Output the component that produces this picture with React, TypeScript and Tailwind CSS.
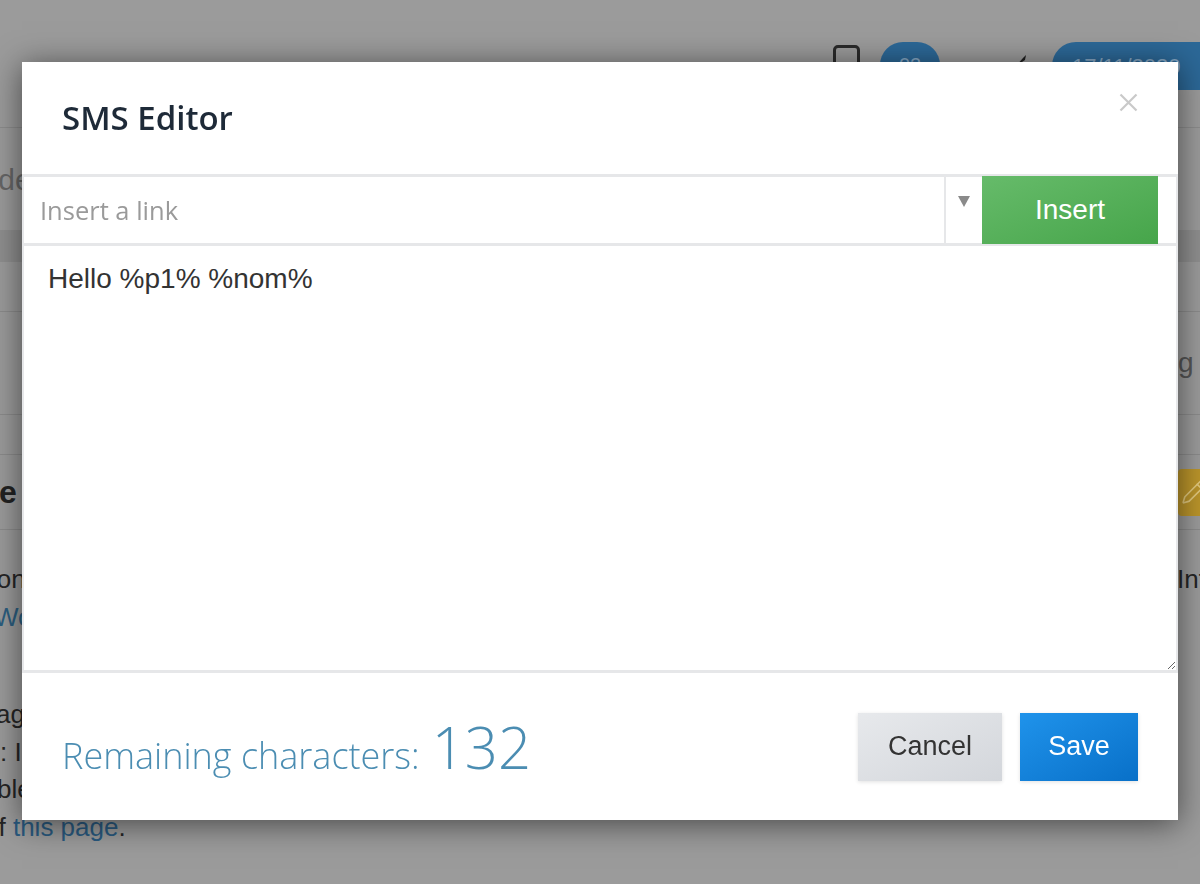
import { Pencil } from "lucide-react"

function LeftPeek({
  children,
  className = ""
}: {
  children: React.ReactNode
  className?: string
}) {
  return (
    <div className="w-[22px] shrink-0 overflow-hidden whitespace-nowrap">
      <div className={className}>{children}</div>
    </div>
  )
}

function BackgroundPage() {
  return (
    <div className="h-[884px] w-full overflow-hidden bg-[#9b9b9b] font-['Liberation_Sans',Arial,sans-serif]">
      <header className="flex h-[128px] items-start justify-end border-b border-[#8c8c8c] pt-[42px]">
        <div className="mt-[3px] h-[32px] w-[27px] rounded-[5px] border-[3px] border-[#2a2a2a]" />
        <div className="ml-[20px] flex h-[46px] w-[60px] items-center justify-center rounded-full bg-[#2c6897] text-[20px] text-[#87a8c5]">
          02
        </div>
        <svg
          className="ml-[74px] mt-[12px]"
          width="16"
          height="14"
          viewBox="0 0 16 14"
        >
          <path d="M2 12 L9 4 L12 1 L11 6 Z" fill="#1f1f1f" />
        </svg>
        <div className="-mr-[30px] ml-[22px] flex h-[48px] w-[178px] items-center rounded-full bg-[#2c6897] pl-[20px] text-[22px] text-[#87a8c5]">
          17/11/2020
        </div>
      </header>

      <div className="flex h-[102px] items-center">
        <LeftPeek className="-ml-[40px] text-[30px] text-[#666]">Code</LeftPeek>
      </div>
      <div className="h-[32px] bg-[#8f8f8f]" />
      <div className="h-[50px] border-b border-[#8b8b8b]" />
      <div className="flex h-[103px] items-center justify-end border-b border-[#8b8b8b]">
        <div className="w-[22px] overflow-hidden whitespace-nowrap text-[28px] text-[#555]">
          g
        </div>
      </div>
      <div className="h-[40px] border-b border-[#8b8b8b]" />
      <div className="flex h-[75px] items-center justify-between border-b border-[#8b8b8b]">
        <LeftPeek className="-ml-[1px] text-[32px] font-bold text-[#222]">
          e
        </LeftPeek>
        <div className="-mr-[10px] flex h-[47px] w-[32px] items-center justify-center rounded-l-[4px] bg-[#bb952b]">
          <Pencil className="h-[26px] w-[26px] shrink-0 text-[#e2c97e]" strokeWidth={1.5} />
        </div>
      </div>

      <div className="pt-[31px] text-[26px] leading-[37.5px] text-[#252525]">
        <div className="flex justify-between">
          <LeftPeek className="-ml-[9px]">ion</LeftPeek>
          <div className="w-[23px] overflow-hidden whitespace-nowrap">Int</div>
        </div>
        <LeftPeek className="-ml-[6px] text-[#2c5e80]">Word</LeftPeek>
        <div className="h-[60px]" />
        <LeftPeek className="-ml-[4px]">age</LeftPeek>
        <LeftPeek>: I</LeftPeek>
        <LeftPeek className="-ml-[3px]">ble</LeftPeek>
        <div className="-ml-[16px] whitespace-nowrap">
          of <span className="text-[#2a5a80]">this page</span>.
        </div>
      </div>
    </div>
  )
}

function SmsEditorModal() {
  return (
    <div className="fixed inset-0 flex justify-center pt-[62px]">
      <div className="flex h-[758px] w-[1156px] flex-col bg-white shadow-[0_4px_30px_rgba(0,0,0,0.55)]">
        <div className="flex h-[112px] shrink-0 items-center justify-between px-[40px]">
          <h2 className="font-['Open_Sans',sans-serif] text-[33px] font-semibold text-[#1e2a38]">
            SMS Editor
          </h2>
          <button className="mb-[32px] flex h-[20px] w-[20px] items-center justify-center">
            <svg width="19" height="19" viewBox="0 0 19 19">
              <path
                d="M1.5 1.5 L17.5 17.5 M17.5 1.5 L1.5 17.5"
                stroke="#c9c9c9"
                strokeWidth="2.2"
              />
            </svg>
          </button>
        </div>

        <div className="flex flex-1 flex-col border-x-2 border-[#e6e7e9]">
          <div className="flex h-[72px] shrink-0 border-y-[3px] border-[#e6e7e9]">
            <input
              className="min-w-0 flex-1 bg-white pl-[16px] font-['Open_Sans',sans-serif] text-[25.5px] text-[#333] outline-none placeholder:text-[#9a9a9a]"
              placeholder="Insert a link"
            />
            <div className="flex w-[38px] shrink-0 justify-center border-l-2 border-[#e6e7e9] pt-[19px]">
              <div className="h-0 w-0 border-x-[6px] border-t-[11px] border-x-transparent border-t-[#8a8a8a]" />
            </div>
            <button className="-my-[1px] w-[176px] shrink-0 bg-linear-to-br from-[#66bb6a] to-[#46a54a] font-['Liberation_Sans',Arial,sans-serif] text-[28px] text-white">
              Insert
            </button>
            <div className="w-[18px] shrink-0" />
          </div>

          <textarea
            className="w-full flex-1 bg-white px-[24px] pt-[12px] font-['Liberation_Sans',Arial,sans-serif] text-[28px] leading-[1.5] text-[#333] outline-none"
            defaultValue="Hello %p1% %nom%"
          />
          <div className="h-[3px] shrink-0 bg-[#e6e7e9]" />
        </div>

        <div className="flex h-[147px] shrink-0 items-center justify-between px-[40px]">
          <div className="flex items-baseline gap-[12px] pt-[8px] font-['Open_Sans',sans-serif] font-light text-[#4b8db2]">
            <span className="text-[36px]">Remaining characters:</span>
            <span className="text-[58px] leading-none">132</span>
          </div>
          <div className="flex gap-[18px] font-['Liberation_Sans',Arial,sans-serif] text-[27px]">
            <button className="h-[68px] w-[144px] bg-linear-to-br from-[#e7e9ec] to-[#d3d6db] text-[#333] shadow-[0_1px_4px_rgba(0,0,0,0.12)]">
              Cancel
            </button>
            <button className="h-[68px] w-[118px] bg-linear-to-br from-[#1f93eb] to-[#0870c8] text-white shadow-[0_1px_4px_rgba(0,0,0,0.12)]">
              Save
            </button>
          </div>
        </div>
      </div>
    </div>
  )
}

export default function App() {
  return (
    <div className="relative h-[884px] w-full overflow-hidden">
      <BackgroundPage />
      <SmsEditorModal />
    </div>
  )
}
